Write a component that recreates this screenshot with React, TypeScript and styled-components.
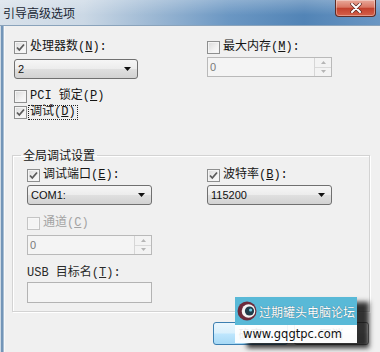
import React from 'react';
import styled, { createGlobalStyle } from 'styled-components';

const labelFont = `"Liberation Mono", "Noto Sans CJK SC", monospace`;
const uiFont = `"Liberation Sans", "Noto Sans CJK SC", sans-serif`;

const GlobalStyle = createGlobalStyle`
  html, body {
    margin: 0;
    padding: 0;
    background: #f0f0f0;
  }
  body {
    width: 380px;
    height: 352px;
    overflow: hidden;
  }
`;

const Window = styled.div`
  position: relative;
  width: 380px;
  height: 352px;
  display: flex;
  flex-direction: column;
  overflow: hidden;
  background: #f0f0f0;
`;

const TitleBar = styled.div`
  flex: none;
  height: 25px;
  display: flex;
  align-items: flex-start;
  padding-left: 3px;
  border-bottom: 1px solid #8aa3bb;
  background:
    linear-gradient(180deg, rgba(255, 255, 255, 0.25) 0%, rgba(255, 255, 255, 0) 60%),
    linear-gradient(90deg, #d8e1ea 0%, #cbd8e5 22%, #98b5d2 42%, #6b97c3 60%, #5284b6 80%, #6a96c3 100%);
`;

const Title = styled.div`
  font: 12px/25px "Noto Sans CJK SC", sans-serif;
  color: #1b2734;
`;

const CloseButton = styled.div`
  margin-left: auto;
  margin-right: 4px;
  width: 41px;
  height: 17px;
  box-sizing: border-box;
  display: flex;
  align-items: center;
  justify-content: center;
  border: 1px solid #5f2b24;
  border-top: none;
  border-radius: 0 0 4px 4px;
  background: linear-gradient(180deg, #e9a99a 0%, #d97663 45%, #c2412d 52%, #d4604a 100%);
  box-shadow: inset 0 0 0 1px rgba(255, 255, 255, 0.35);
`;

const Body = styled.div`
  flex: 1;
  display: flex;
`;

const Frame = styled.div`
  flex: none;
  width: 5px;
  background: linear-gradient(90deg, #cdd9e4 0 1px, #7395b8 1px 3px, #a9bed2 3px 4px, #f9f9f9 4px 5px);
`;

const Client = styled.div`
  flex: 1;
  display: flex;
  flex-direction: column;
  padding-top: 13px;
`;

const TopGrid = styled.div`
  display: grid;
  grid-template-columns: 193px 125px;
  padding-left: 9px;
`;

const Column = styled.div`
  display: flex;
  flex-direction: column;
`;

const CheckRow = styled.div<{ $gap?: number }>`
  display: flex;
  align-items: center;
  height: 16px;
  margin-top: ${p => p.$gap ?? 0}px;
`;

const Label = styled.span<{ $disabled?: boolean; $focus?: boolean }>`
  font-family: ${labelFont};
  font-size: 12px;
  line-height: 13px;
  color: ${p => (p.$disabled ? '#a3a3a3' : '#151515')};
  margin-left: 2px;
  padding: 0 1px;
  outline: ${p => (p.$focus ? '1px dotted #222' : 'none')};
  white-space: nowrap;
`;

const PlainLabel = styled(Label)`
  margin-left: 0;
  padding: 0;
  color: #2a2a2a;
`;

const LabelRow = styled.div<{ $gap?: number }>`
  display: flex;
  align-items: center;
  height: 16px;
  margin-top: ${p => p.$gap ?? 0}px;
`;

const Box = styled.span<{ $disabled?: boolean }>`
  flex: none;
  width: 13px;
  height: 13px;
  box-sizing: border-box;
  display: flex;
  align-items: center;
  justify-content: center;
  border: 1px solid ${p => (p.$disabled ? '#c4c4c4' : '#8e8f8f')};
  background: ${p =>
    p.$disabled
      ? '#f4f4f4'
      : 'linear-gradient(135deg, #d9d9d9 0%, #f2f2f2 60%, #fbfbfb 100%)'};
  box-shadow: inset 0 0 0 1px ${p => (p.$disabled ? '#f7f7f7' : '#f4f4f4')};
`;

const Combo = styled.div<{ $gap?: number; $width?: number }>`
  width: ${p => p.$width ?? 125}px;
  height: 20px;
  margin-top: ${p => p.$gap ?? 0}px;
  box-sizing: border-box;
  display: flex;
  align-items: center;
  padding: 0 6px 0 3px;
  border: 1px solid #707070;
  border-radius: 3px;
  background: linear-gradient(180deg, #f6f6f6 0%, #ececec 50%, #dfdfdf 52%, #d2d2d2 100%);
  font-family: ${uiFont};
  font-size: 11px;
  color: #111;
`;

const ComboText = styled.span`
  flex: 1;
`;

const Spin = styled.div<{ $gap?: number }>`
  width: 125px;
  height: 20px;
  margin-top: ${p => p.$gap ?? 0}px;
  box-sizing: border-box;
  display: flex;
  border: 1px solid #b9b9b9;
  background: #f4f4f4;
  font-family: ${uiFont};
  font-size: 11px;
  color: #7a7a7a;
`;

const SpinValue = styled.span`
  flex: 1;
  padding-left: 2px;
  line-height: 18px;
`;

const SpinButtons = styled.div`
  width: 16px;
  display: flex;
  flex-direction: column;
  border-left: 1px solid #d6d6d6;
`;

const SpinHalf = styled.div<{ $top?: boolean }>`
  flex: 1;
  display: flex;
  align-items: center;
  justify-content: center;
  border-bottom: ${p => (p.$top ? '1px solid #dadada' : 'none')};
  background: #f3f3f3;
`;

const TextBox = styled.div<{ $gap?: number }>`
  width: 125px;
  height: 21px;
  margin-top: ${p => p.$gap ?? 0}px;
  box-sizing: border-box;
  border: 1px solid #b3b3b3;
  background: #f4f4f4;
`;

const Group = styled.fieldset`
  width: 358px;
  box-sizing: border-box;
  margin: 27px 0 0 7px;
  padding: 4px 0 8px 14px;
  border: 1px solid #d3d3d3;
  box-shadow: inset 1px 1px 0 #fff, 1px 1px 0 #fff;
  min-width: 0;
`;

const Legend = styled.legend`
  margin-left: -6px;
  padding: 0 2px;
  font-family: "Noto Sans CJK SC", sans-serif;
  font-size: 12px;
  line-height: 16px;
  color: #151515;
`;

const GroupGrid = styled.div`
  display: grid;
  grid-template-columns: 180px 125px;
`;

const ButtonRow = styled.div`
  display: flex;
  justify-content: flex-end;
  gap: 6px;
  padding-right: 11px;
  margin-top: 10px;
`;

const DialogButton = styled.div<{ $primary?: boolean }>`
  width: 75px;
  height: 23px;
  box-sizing: border-box;
  display: flex;
  align-items: center;
  justify-content: center;
  border: 1px solid ${p => (p.$primary ? '#3c7fb1' : '#707070')};
  border-radius: 3px;
  background: ${p =>
    p.$primary
      ? 'linear-gradient(180deg, #eaf6fd 0%, #d9f0fc 48%, #bee6fd 52%, #a7d9f5 100%)'
      : 'linear-gradient(180deg, #f2f2f2 0%, #ebebeb 48%, #dddddd 52%, #cfcfcf 100%)'};
  font-family: "Noto Sans CJK SC", sans-serif;
  font-size: 12px;
  color: #111;
`;

const Watermark = styled.div`
  position: absolute;
  left: 235px;
  top: 297px;
  width: 122px;
  box-shadow: 12px 5px 5px rgba(15, 15, 15, 0.85);
`;

const MarkTop = styled.div`
  height: 28px;
  display: flex;
  align-items: center;
  gap: 2px;
  padding-left: 2px;
  background: #59b9d7;
  font-family: "Noto Sans CJK SC", sans-serif;
  font-size: 12px;
  color: #fff;
  text-shadow: 0 0 1px #2b5366;
  white-space: nowrap;
`;

const MarkBottom = styled.div`
  height: 18px;
  display: flex;
  align-items: center;
  padding-left: 8px;
  background: rgba(255, 255, 255, 0.92);
  font-family: "DejaVu Sans", sans-serif;
  font-size: 11.5px;
  color: #111;
`;

const Check = ({ checked, disabled }: { checked?: boolean; disabled?: boolean }) => (
  <Box $disabled={disabled}>
    {checked && (
      <svg width="11" height="11" viewBox="0 0 11 11">
        <path d="M2 5.5 L4.3 8 L9 2.5" fill="none" stroke="#5b5b5b" strokeWidth="1.8" />
      </svg>
    )}
  </Box>
);

const Arrow = () => (
  <svg width="7" height="4" viewBox="0 0 7 4">
    <path d="M0 0 H7 L3.5 4 Z" fill="#111" />
  </svg>
);

const SpinControl = ({ value, gap }: { value: string; gap?: number }) => (
  <Spin $gap={gap}>
    <SpinValue>{value}</SpinValue>
    <SpinButtons>
      <SpinHalf $top>
        <svg width="5" height="3" viewBox="0 0 5 3">
          <path d="M0 3 L2.5 0 L5 3 Z" fill="#b5b5b5" />
        </svg>
      </SpinHalf>
      <SpinHalf>
        <svg width="5" height="3" viewBox="0 0 5 3">
          <path d="M0 0 H5 L2.5 3 Z" fill="#b5b5b5" />
        </svg>
      </SpinHalf>
    </SpinButtons>
  </Spin>
);

const Logo = () => (
  <svg width="20" height="20" viewBox="0 0 20 20">
    <circle cx="10" cy="10" r="9.5" fill="#6d2a3a" />
    <circle cx="11.5" cy="10" r="6.8" fill="#f4f4f4" />
    <circle cx="12.5" cy="10" r="4.6" fill="#1f3c4b" />
    <circle cx="13.6" cy="9" r="1.6" fill="#6ccbe3" />
  </svg>
);

export default function App() {
  return (
    <>
      <GlobalStyle />
      <Window>
        <TitleBar>
          <Title>引导高级选项</Title>
          <CloseButton>
            <svg width="12" height="10" viewBox="0 0 12 10">
              <path d="M2 1 L10 9 M10 1 L2 9" stroke="#5a2a24" strokeWidth="3.4" strokeLinecap="round" />
              <path d="M2 1 L10 9 M10 1 L2 9" stroke="#fff" strokeWidth="2" strokeLinecap="round" />
            </svg>
          </CloseButton>
        </TitleBar>
        <Body>
          <Frame />
          <Client>
            <TopGrid>
              <Column>
                <CheckRow>
                  <Check checked />
                  <Label>处理器数(<u>N</u>):</Label>
                </CheckRow>
                <Combo $gap={4} $width={124}>
                  <ComboText>2</ComboText>
                  <Arrow />
                </Combo>
                <CheckRow $gap={9}>
                  <Check />
                  <Label>PCI 锁定(<u>P</u>)</Label>
                </CheckRow>
                <CheckRow>
                  <Check checked />
                  <Label $focus>调试(<u>D</u>)</Label>
                </CheckRow>
              </Column>
              <Column>
                <CheckRow>
                  <Check />
                  <Label>最大内存(<u>M</u>):</Label>
                </CheckRow>
                <SpinControl value="0" gap={2} />
              </Column>
            </TopGrid>

            <Group>
              <Legend>全局调试设置</Legend>
              <GroupGrid>
                <Column>
                  <CheckRow>
                    <Check checked />
                    <Label>调试端口(<u>E</u>):</Label>
                  </CheckRow>
                  <Combo $gap={2}>
                    <ComboText>COM1:</ComboText>
                    <Arrow />
                  </Combo>
                  <CheckRow $gap={10}>
                    <Check disabled />
                    <Label $disabled>通道(<u>C</u>)</Label>
                  </CheckRow>
                  <SpinControl value="0" gap={4} />
                  <LabelRow $gap={10}>
                    <PlainLabel>USB 目标名(<u>T</u>):</PlainLabel>
                  </LabelRow>
                  <TextBox $gap={1} />
                </Column>
                <Column>
                  <CheckRow>
                    <Check checked />
                    <Label>波特率(<u>B</u>):</Label>
                  </CheckRow>
                  <Combo $gap={2}>
                    <ComboText>115200</ComboText>
                    <Arrow />
                  </Combo>
                </Column>
              </GroupGrid>
            </Group>

            <ButtonRow>
              <DialogButton $primary>确定</DialogButton>
              <DialogButton>取消</DialogButton>
            </ButtonRow>
          </Client>
        </Body>

        <Watermark>
          <MarkTop>
            <Logo />
            过期罐头电脑论坛
          </MarkTop>
          <MarkBottom>www.gqgtpc.com</MarkBottom>
        </Watermark>
      </Window>
    </>
  );
}
